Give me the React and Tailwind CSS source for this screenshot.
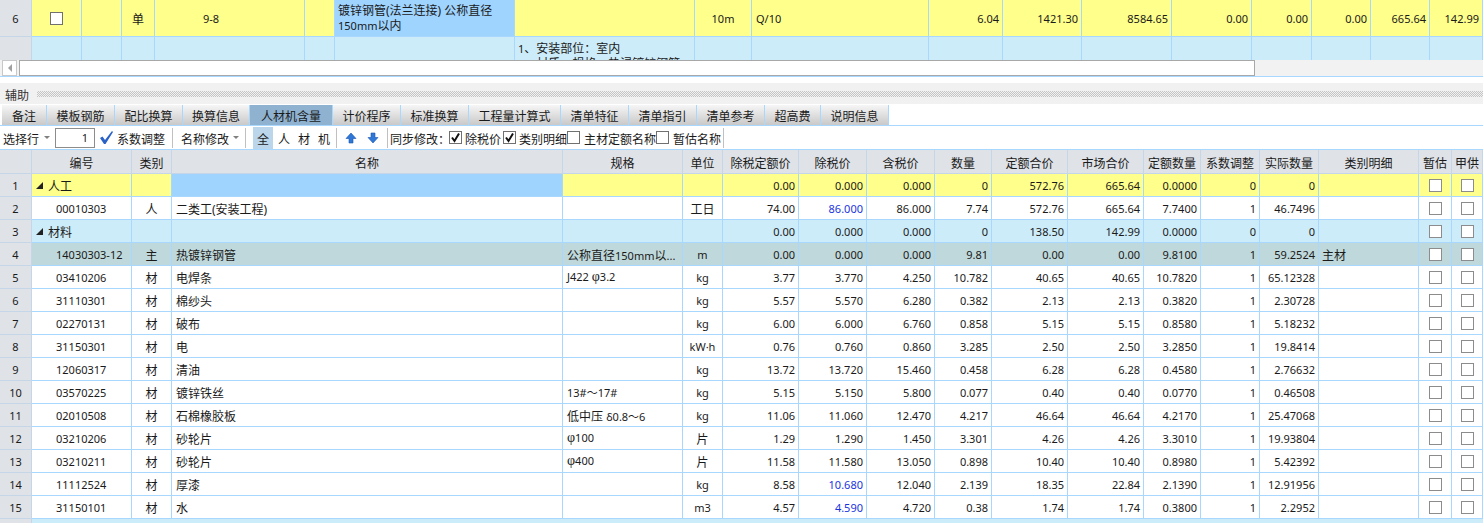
const topCols = "grid grid-cols-[32px_50px_40px_33px_150px_30px_180px_180px_57px_177px_74px_79px_90px_80px_60px_59px_59px_53px]";
const gridCols = "grid grid-cols-[32px_100px_40px_391px_120px_40px_76px_68px_68px_57px_76px_76px_57px_59px_59px_100px_33px_31px]";

const tabs = [
  ["备注", "w-[45px]"],
  ["模板钢筋", "w-[68px]"],
  ["配比换算", "w-[68px]"],
  ["换算信息", "w-[67px]"],
  ["人材机含量", "w-[83px]"],
  ["计价程序", "w-[68px]"],
  ["标准换算", "w-[68px]"],
  ["工程量计算式", "w-[92px]"],
  ["清单特征", "w-[68px]"],
  ["清单指引", "w-[68px]"],
  ["清单参考", "w-[68px]"],
  ["超高费", "w-[56px]"],
  ["说明信息", "w-[68px]"],
];

const headings = ["", "编号", "类别", "名称", "规格", "单位", "除税定额价", "除税价", "含税价", "数量", "定额合价", "市场合价", "定额数量", "系数调整", "实际数量", "类别明细", "暂估", "甲供"];

const rows = [
  { kind: "yellow", group: "人工", nums: ["0.00", "0.000", "0.000", "0", "572.76", "665.64", "0.0000", "0", "0"] },
  { code: "00010303", type: "人", name: "二类工(安装工程)", unit: "工日", nums: ["74.00", "86.000", "86.000", "7.74", "572.76", "665.64", "7.7400", "1", "46.7496"], blue: true },
  { kind: "light", group: "材料", nums: ["0.00", "0.000", "0.000", "0", "138.50", "142.99", "0.0000", "0", "0"] },
  { kind: "main", code: "14030303-12", type: "主", name: "热镀锌钢管", spec: <J>公称直径<N>150mm</N>以<N>...</N></J>, unit: "m", nums: ["0.00", "0.000", "0.000", "9.81", "0.00", "0.00", "9.8100", "1", "59.2524"], detail: "主材" },
  { code: "03410206", type: "材", name: "电焊条", spec: <N>J422 <Phi />3.2</N>, unit: "kg", nums: ["3.77", "3.770", "4.250", "10.782", "40.65", "40.65", "10.7820", "1", "65.12328"] },
  { code: "31110301", type: "材", name: "棉纱头", unit: "kg", nums: ["5.57", "5.570", "6.280", "0.382", "2.13", "2.13", "0.3820", "1", "2.30728"] },
  { code: "02270131", type: "材", name: "破布", unit: "kg", nums: ["6.00", "6.000", "6.760", "0.858", "5.15", "5.15", "0.8580", "1", "5.18232"] },
  { code: "31150301", type: "材", name: "电", unit: "kW·h", nums: ["0.76", "0.760", "0.860", "3.285", "2.50", "2.50", "3.2850", "1", "19.8414"] },
  { code: "12060317", type: "材", name: "清油", unit: "kg", nums: ["13.72", "13.720", "15.460", "0.458", "6.28", "6.28", "0.4580", "1", "2.76632"] },
  { code: "03570225", type: "材", name: "镀锌铁丝", spec: <N>13#～17#</N>, unit: "kg", nums: ["5.15", "5.150", "5.800", "0.077", "0.40", "0.40", "0.0770", "1", "0.46508"] },
  { code: "02010508", type: "材", name: "石棉橡胶板", spec: <J>低中压 <N>δ0.8～6</N></J>, unit: "kg", nums: ["11.06", "11.060", "12.470", "4.217", "46.64", "46.64", "4.2170", "1", "25.47068"] },
  { code: "03210206", type: "材", name: "砂轮片", spec: <N><Phi />100</N>, unit: "片", nums: ["1.29", "1.290", "1.450", "3.301", "4.26", "4.26", "3.3010", "1", "19.93804"] },
  { code: "03210211", type: "材", name: "砂轮片", spec: <N><Phi />400</N>, unit: "片", nums: ["11.58", "11.580", "13.050", "0.898", "10.40", "10.40", "0.8980", "1", "5.42392"] },
  { code: "11112524", type: "材", name: "厚漆", unit: "kg", nums: ["8.58", "10.680", "12.040", "2.139", "18.35", "22.84", "2.1390", "1", "12.91956"], blue: true },
  { code: "31150101", type: "材", name: "水", unit: "m3", nums: ["4.57", "4.590", "4.720", "0.38", "1.74", "1.74", "0.3800", "1", "2.2952"], blue: true },
];

const rowBg = {
  yellow: "bg-[#ffff8c]",
  light: "bg-[#cdecf9]",
  main: "bg-[#bfd8db]",
  plain: "bg-white",
};

function N({ children, className = "" }) {
  return <span className={`text-[11px] ${className}`}>{children}</span>;
}

// chinese glyphs sit a bit high in their line box, push them down
function J({ children }) {
  return <span className="pt-[4px]">{children}</span>;
}

function Phi() {
  return <span className="font-['Liberation_Serif'] text-[14px]">φ</span>;
}

function Checkbox({ checked, dark }) {
  return (
    <span className={`flex h-[13px] w-[13px] shrink-0 items-center justify-center border bg-white ${dark ? "border-[#707070]" : "border-[#8c8c8c]"}`}>
      {checked && (
        <svg width="11" height="11" viewBox="0 0 11 11">
          <path d="M2 5.5 L4.5 9 L9 1.5" fill="none" stroke="#111" strokeWidth="2" />
        </svg>
      )}
    </span>
  );
}

function RowNum({ children }) {
  return (
    <div className="flex items-center justify-center border-r border-b border-[#c4d6e8] bg-[#dfe2e7]">
      <N>{children}</N>
    </div>
  );
}

function Cell({ children, className = "" }) {
  return <div className={`flex items-center overflow-hidden whitespace-nowrap border-r border-b border-[#a8d8ff] ${className}`}>{children}</div>;
}

function NumCell({ children, blue }) {
  return (
    <Cell className="justify-end pr-[3px]">
      <N className={blue ? "text-[#1a35e0]" : ""}>{children}</N>
    </Cell>
  );
}

function Triangle() {
  return (
    <svg width="7" height="7" viewBox="0 0 7 7" className="mr-[5px] ml-[4px] shrink-0">
      <path d="M0 7 L7 0 L7 7 Z" fill="#222" />
    </svg>
  );
}

function Arrow({ down }) {
  return (
    <svg width="12" height="12" viewBox="0 0 12 12" className={down ? "rotate-180" : ""}>
      <path d="M6 1 L11 6.5 L8 6.5 L8 11 L4 11 L4 6.5 L1 6.5 Z" fill="#2f78d8" stroke="#1c56b0" strokeWidth="0.6" />
    </svg>
  );
}

function Caret({ className = "" }) {
  return <span className={`h-0 w-0 border-x-[3px] border-t-[3px] border-x-transparent border-t-[#808080] ${className}`} />;
}

function Sep({ className = "" }) {
  return <span className={`h-[20px] w-px bg-[#c0c0c0] ${className}`} />;
}

function TopGrid() {
  return (
    <div>
      <div className={`${topCols} h-[37px] bg-[#ffff8c]`}>
        <RowNum>6</RowNum>
        <Cell className="justify-center"><Checkbox dark /></Cell>
        <Cell />
        <Cell className="justify-center"><J>单</J></Cell>
        <Cell className="pl-[48px]"><N>9-8</N></Cell>
        <Cell />
        <Cell className="items-start whitespace-normal bg-[#9fd4ff] pl-[3px] pt-[3px] leading-[15px]">
          <span>镀锌钢管(法兰连接) 公称直径<br /><N>150mm</N>以内</span>
        </Cell>
        <Cell />
        <Cell className="justify-center"><N>10m</N></Cell>
        <Cell className="pl-[4px]"><N>Q/10</N></Cell>
        {["6.04", "1421.30", "8584.65", "0.00", "0.00", "0.00", "665.64", "142.99"].map((v, i) => (
          <NumCell key={i}>{v}</NumCell>
        ))}
      </div>
      <div className={`${topCols} h-[23px] bg-[#cdecf9]`}>
        <div className="border-r border-[#c4d6e8] bg-[#dfe2e7]" />
        {[1, 2, 3, 4, 5, 6].map((i) => <div key={i} className="border-r border-[#a8d8ff]" />)}
        <div className="overflow-hidden whitespace-nowrap border-r border-[#a8d8ff] pl-[3px] pt-[4px] leading-[15px]">
          <N>1</N>、安装部位：室内<br /><N>2</N>、材质、规格：热浸镀锌钢管
        </div>
        {[1, 2, 3, 4, 5, 6, 7, 8, 9, 10].map((i) => <div key={i} className="border-r border-[#a8d8ff]" />)}
      </div>
    </div>
  );
}

function ScrollBar() {
  return (
    <div className="flex h-[17px] border-b border-[#a8d8ff] bg-[#f2f2f2]">
      <div className="ml-[2px] flex w-[15px] items-center justify-center border border-[#c8c8c8] bg-white">
        <span className="h-0 w-0 border-y-[4px] border-r-[4px] border-y-transparent border-r-[#a0a0a0]" />
      </div>
      <div className="ml-[2px] w-[1236px] border border-[#a8a8a8] bg-white" />
    </div>
  );
}

function Tabs() {
  return (
    <div className="flex h-[21px] border-b border-[#a8d8ff] pl-[2px]">
      {tabs.map(([label, width]) => {
        const active = label === "人材机含量";
        return (
          <div
            key={label}
            className={`flex items-center justify-center border-r border-[#a8d8ff] ${width} ${active ? "bg-[#8fb2d1]" : "bg-gradient-to-b from-[#f6f6f6] to-[#c9c9c9]"}`}
          >
            <J>{label}</J>
          </div>
        );
      })}
    </div>
  );
}

function Toolbar() {
  return (
    <div className="flex h-[24px] items-center border-b border-[#a8d8ff] bg-white pl-[3px]">
      <J>选择行</J>
      <Caret className="ml-[5px]" />
      <div className="ml-[5px] flex h-[20px] w-[40px] items-center justify-end border border-[#8c8c8c] pr-[6px]"><N>1</N></div>
      <svg width="15" height="15" viewBox="0 0 15 15" className="ml-[4px]">
        <path d="M1 8 L3.5 6.5 L6 10 L13 1 L14 2 L6.5 14 L5 14 Z" fill="#2a62c8" />
      </svg>
      <span className="ml-[3px] flex"><J>系数调整</J></span>
      <Sep className="ml-[7px]" />
      <span className="ml-[8px] flex"><J>名称修改</J></span>
      <Caret className="ml-[4px]" />
      <Sep className="ml-[6px]" />
      <span className="ml-[7px] flex h-[22px] w-[20px] items-center justify-center bg-[#bbd5ea]"><J>全</J></span>
      <span className="ml-[3px] flex w-[16px] justify-center"><J>人</J></span>
      <span className="ml-[4px] flex w-[16px] justify-center"><J>材</J></span>
      <span className="ml-[4px] flex w-[16px] justify-center"><J>机</J></span>
      <Sep className="ml-[4px]" />
      <span className="ml-[8px] flex"><Arrow /></span>
      <span className="ml-[10px] flex"><Arrow down /></span>
      <Sep className="ml-[8px]" />
      <span className="ml-[2px] flex"><J>同步修改：</J></span>
      <span className="ml-[-1px]"><Checkbox checked dark /></span>
      <span className="ml-[3px] flex"><J>除税价</J></span>
      <span className="ml-[2px]"><Checkbox checked dark /></span>
      <span className="ml-[3px] flex"><J>类别明细</J></span>
      <Checkbox dark />
      <span className="ml-[4px] flex"><J>主材定额名称</J></span>
      <Checkbox dark />
      <span className="ml-[4px] flex"><J>暂估名称</J></span>
      <Sep className="ml-[2px]" />
    </div>
  );
}

function DataRow({ row, index }) {
  const bg = rowBg[row.kind || "plain"];
  return (
    <div className={`${gridCols} h-[23px] ${bg}`}>
      <RowNum>{index + 1}</RowNum>
      {row.group ? (
        <Cell><Triangle /><J>{row.group}</J></Cell>
      ) : (
        <Cell className="pl-[24px]"><N>{row.code}</N></Cell>
      )}
      <Cell className="justify-center"><J>{row.type}</J></Cell>
      <Cell className={`pl-[4px] ${row.kind === "yellow" ? "bg-[#9fd4ff]" : ""}`}><J>{row.name}</J></Cell>
      <Cell className="pl-[4px]">{row.spec}</Cell>
      <Cell className="justify-center">
        {row.unit && (/^[a-zA-Z]/.test(row.unit) ? <N>{row.unit}</N> : <J>{row.unit}</J>)}
      </Cell>
      {row.nums.map((v, i) => (
        <NumCell key={i} blue={row.blue && i === 1}>{v}</NumCell>
      ))}
      <Cell className="pl-[3px]"><J>{row.detail}</J></Cell>
      <Cell className="justify-center"><Checkbox /></Cell>
      <Cell className="justify-center"><Checkbox /></Cell>
    </div>
  );
}

export default function App() {
  return (
    <div className="flex h-[523px] w-[1483px] flex-col overflow-hidden bg-white font-['Noto_Sans','Noto_Sans_CJK_SC',sans-serif] text-[12px] leading-none text-[#1a1a1a]">
      <TopGrid />
      <ScrollBar />
      <div className="h-[6px] shrink-0" />
      <div className="flex h-[21px] shrink-0 items-center bg-[#f1f1f1] pl-[5px]">
        <span className="flex text-[#333]"><J>辅助</J></span>
        <div className="ml-[8px] h-[6px] flex-1 bg-[repeating-conic-gradient(#c4c4c4_0_25%,transparent_0_50%)] bg-[length:2px_2px]" />
      </div>
      <div className="h-px shrink-0" />
      <Tabs />
      <Toolbar />
      <div className={`${gridCols} h-[24px] shrink-0 bg-[#dfe2e7]`}>
        {headings.map((h, i) => (
          <div key={i} className="flex items-center justify-center border-r border-b border-[#c4d6e8]"><J>{h}</J></div>
        ))}
      </div>
      {rows.map((row, i) => <DataRow key={i} row={row} index={i} />)}
      <div className={`${gridCols} h-[4px] shrink-0 bg-[#cdecf9]`}>
        <div className="border-r border-[#c4d6e8] bg-[#dfe2e7]" />
      </div>
    </div>
  );
}
